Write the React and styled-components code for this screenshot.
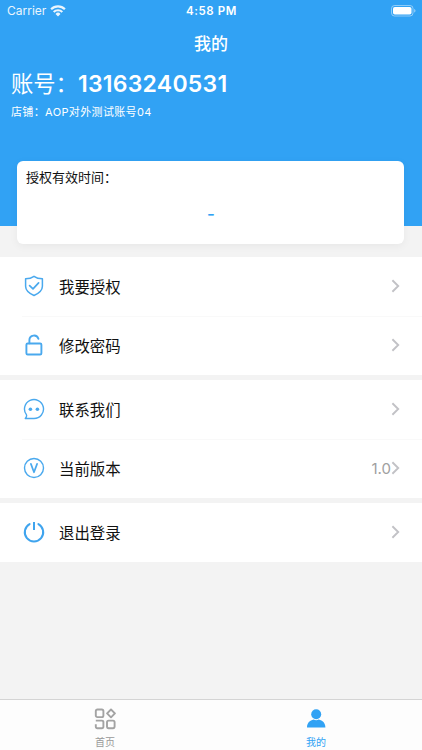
import React, { useState } from 'react';
import styled, { createGlobalStyle } from 'styled-components';

const BLUE = '#31a2f4';

const ShieldIcon = () => (
    <svg width="22" height="22" viewBox="0 0 22 22" fill="none" stroke="#4aa9ee" strokeWidth="1.5" strokeLinecap="round" strokeLinejoin="round">
        <path d="M11 1.3C8.6 3 5.6 3.7 2.6 3.8v7.4c0 4.6 3.8 7.2 8.4 9.3 4.6-2.1 8.4-4.7 8.4-9.3V3.8C16.4 3.7 13.4 3 11 1.3z" />
        <path d="M6.6 10.6l3.4 3.2 5.6-5.9" strokeWidth="1.7" />
    </svg>
)

const LockIcon = () => (
    <svg width="22" height="22" viewBox="0 0 22 22" fill="none" stroke="#4aa9ee" strokeWidth="1.9" strokeLinecap="round">
        <rect x="3.4" y="9.5" width="15" height="11" rx="1.3" />
        <path d="M6.4 9.3V6.2a4.6 4.6 0 0 1 9-1.4" />
    </svg>
)

const ChatIcon = () => (
    <svg width="22" height="22" viewBox="0 0 22 22" fill="none" stroke="#4aa9ee" strokeWidth="1.4" strokeLinejoin="round">
        <path d="M2.3 20.5H11A9.5 9.5 0 1 0 3.4 16.7c.5 1.1 0 2.6-1.1 3.8z" />
        <circle cx="7.4" cy="11.2" r="1.8" fill="#4aa9ee" stroke="none" />
        <circle cx="14.4" cy="11.2" r="1.8" fill="#4aa9ee" stroke="none" />
    </svg>
)

const VersionIcon = () => (
    <svg width="22" height="22" viewBox="0 0 22 22" fill="none" stroke="#4aa9ee" strokeWidth="1.4" strokeLinecap="round" strokeLinejoin="round">
        <circle cx="11" cy="11" r="9.5" />
        <path d="M7.9 6.9L11 15.3l3.1-8.4" strokeWidth="1.7" />
    </svg>
)

const PowerIcon = () => (
    <svg width="22" height="22" viewBox="0 0 22 22" fill="none" stroke="#3fa4ee" strokeWidth="2" strokeLinecap="round">
        <path d="M6.6 3.1a9.2 9.2 0 1 0 8.8 0" />
        <path d="M11 1v8" strokeLinecap="butt" />
    </svg>
)

const ChevronIcon = () => (
    <svg width="9" height="14" viewBox="0 0 9 14" fill="none" stroke="#c2c2c6" strokeWidth="1.9">
        <path d="M1.4 1.3L7.2 7l-5.8 5.7" />
    </svg>
)

const WifiIcon = () => (
    <svg width="16" height="12" viewBox="0 0 16 12" fill="none" stroke="#fff" strokeWidth="2.2">
        <path d="M1.1 4.3a9.8 9.8 0 0 1 13.8 0" />
        <path d="M3.7 7a6.1 6.1 0 0 1 8.6 0" />
        <path d="M8 11.4L5.5 8.9a3.5 3.5 0 0 1 5 0z" fill="#fff" stroke="none" />
    </svg>
)

const BatteryIcon = () => (
    <svg width="25" height="12" viewBox="0 0 25 12">
        <rect x="0.5" y="0.5" width="21.5" height="10.5" rx="3" fill="none" stroke="#fff" strokeOpacity="0.45" />
        <rect x="2" y="2" width="18.5" height="7.5" rx="1.8" fill="#fff" />
        <path d="M23.2 4v3.6c.8-.3 1.3-1 1.3-1.8s-.5-1.5-1.3-1.8z" fill="#fff" fillOpacity="0.5" />
    </svg>
)

const HomeIcon = () => (
    <svg width="22" height="22" viewBox="0 0 22 22" fill="none" stroke="#a3a3a3" strokeWidth="1.9" strokeLinejoin="round">
        <rect x="1.8" y="1.5" width="7.6" height="7.6" rx="1.6" />
        <path d="M17 1.5l3.9 3.9L17 9.3l-3.900-3.900z" />
        <path d="M1.8 12.6H8a1.4 1.4 0 0 1 1.4 1.4v4.8A1.4 1.4 0 0 1 8 20.200H3.200a1.400 1.400 0 0 1-1.400-1.400v-2.600" />
        <rect x="13" y="12.6" width="7.6" height="7.6" rx="1.6" />
    </svg>
)

const UserIcon = () => (
    <svg width="22" height="22" viewBox="0 0 22 22" fill={BLUE}>
        <circle cx="11.2" cy="6.3" r="5" />
        <path d="M2 19.5c0-4.4 2.8-7.1 6.7-7.9 1.5.9 3.5.9 5 0 3.9.8 6.7 3.5 6.7 7.9z" />
    </svg>
)

const menuGroups = [
    [
        { title: '我要授权', Icon: ShieldIcon },
        { title: '修改密码', Icon: LockIcon },
    ],
    [
        { title: '联系我们', Icon: ChatIcon },
        { title: '当前版本', Icon: VersionIcon, value: '1.0' },
    ],
    [
        { title: '退出登录', Icon: PowerIcon },
    ],
];

const tabs = [
    { id: 'home', title: '首页', Icon: HomeIcon },
    { id: 'mine', title: '我的', Icon: UserIcon },
];

const App = () => {
    const [activeTab, setActiveTab] = useState('mine');

    return (
        <>
            <GlobalStyle />
            <Page>
                <Header>
                    <StatusBar>
                        <Carrier>Carrier <WifiIcon /></Carrier>
                        <Clock>4:58 PM</Clock>
                        <Battery><BatteryIcon /></Battery>
                    </StatusBar>
                    <Title>我的</Title>
                    <Account>账号：<strong>13163240531</strong></Account>
                    <Shop>店铺：AOP对外测试账号04</Shop>
                </Header>

                <Card>
                    <CardTitle>授权有效时间：</CardTitle>
                    <CardValue>-</CardValue>
                </Card>

                <Menu>
                    {menuGroups.map((group, index) => (
                        <MenuGroup key={index}>
                            {group.map(({ title, Icon, value }) => (
                                <MenuRow key={title}>
                                    <Icon />
                                    <MenuLabel>{title}</MenuLabel>
                                    {value && <MenuValue>{value}</MenuValue>}
                                    <ChevronIcon />
                                </MenuRow>
                            ))}
                        </MenuGroup>
                    ))}
                </Menu>

                <TabBar>
                    {tabs.map(({ id, title, Icon }) => (
                        <Tab key={id} $active={activeTab === id} onClick={() => setActiveTab(id)}>
                            <Icon />
                            <span>{title}</span>
                        </Tab>
                    ))}
                </TabBar>
            </Page>
        </>
    )
}

const GlobalStyle = createGlobalStyle`
    *{
        box-sizing:border-box;
    }

    body{
        margin:0;
        font-family:Inter, "Noto Sans CJK SC", sans-serif;
    }

    svg{
        display:block;
        flex-shrink:0;
    }
`;

const Page = styled.div`
    display:flex;
    flex-direction:column;
    height:100vh;
    overflow:hidden;
    background:#f3f3f3;
`;

const Header = styled.header`
    flex:none;
    height:226px;
    background:${BLUE};
    color:white;
`;

const StatusBar = styled.div`
    display:grid;
    grid-template-columns:1fr auto 1fr;
    align-items:center;
    height:22px;
    padding:0 6px 0 7px;
    font-size:12px;
    line-height:22px;
`;

const Carrier = styled.div`
    display:flex;
    align-items:center;
    gap:4px;
    opacity:0.9;
`;

const Clock = styled.div`
    font-weight:600;
    font-size:11.5px;
    letter-spacing:0.6px;
`;

const Battery = styled.div`
    display:flex;
    justify-content:flex-end;
`;

const Title = styled.h1`
    margin:0;
    height:44px;
    font-size:17px;
    font-weight:500;
    line-height:44px;
    text-align:center;
`;

const Account = styled.div`
    height:34px;
    padding-left:11px;
    font-size:22.3px;
    line-height:35px;
    white-space:nowrap;

    strong{
        font-size:23px;
        font-weight:600;
        letter-spacing:0.25px;
    }
`;

const Shop = styled.div`
    padding-left:11px;
    font-size:11px;
    line-height:24px;
    letter-spacing:0.36px;
`;

const Card = styled.section`
    flex:none;
    height:83px;
    margin:-65px 18px 0 17px;
    padding:4px 9px;
    border-radius:6px;
    background:white;
    box-shadow:0 2px 8px rgba(0, 0, 0, 0.05);
    z-index:1;
`;

const CardTitle = styled.div`
    font-size:13px;
    line-height:25px;
    color:#111;
`;

const CardValue = styled.div`
    margin-top:12px;
    padding-left:1px;
    font-size:17px;
    font-weight:500;
    line-height:25px;
    text-align:center;
    color:${BLUE};
`;

const Menu = styled.div`
    display:flex;
    flex-direction:column;
    gap:5px;
    flex:1;
    margin-top:13px;
`;

const MenuGroup = styled.ul`
    margin:0;
    padding:0;
    list-style:none;
    background:white;
`;

const MenuRow = styled.li`
    display:flex;
    align-items:center;
    height:59px;
    padding:0 22px 1px 23px;

    & + &{
        background:linear-gradient(#f9f9f9, #f9f9f9) 22px 0 / 100% 1px no-repeat;
    }
`;

const MenuLabel = styled.span`
    flex:1;
    margin-left:14px;
    padding-bottom:1px;
    font-size:15.4px;
    color:#111;
`;

const MenuValue = styled.span`
    font-size:15px;
    color:#a0a0a0;
`;

const TabBar = styled.nav`
    display:flex;
    flex:none;
    height:51px;
    border-top:1px solid #d4d4d4;
    background:#fdfdfd;
`;

const Tab = styled.button`
    display:flex;
    flex:1;
    flex-direction:column;
    align-items:center;
    gap:5px;
    padding:8px 1px 0 0;
    border:0;
    background:none;
    font-family:inherit;
    font-size:10px;
    line-height:14px;
    color:${(props) => (props.$active ? BLUE : '#999')};
`;

export default App;
